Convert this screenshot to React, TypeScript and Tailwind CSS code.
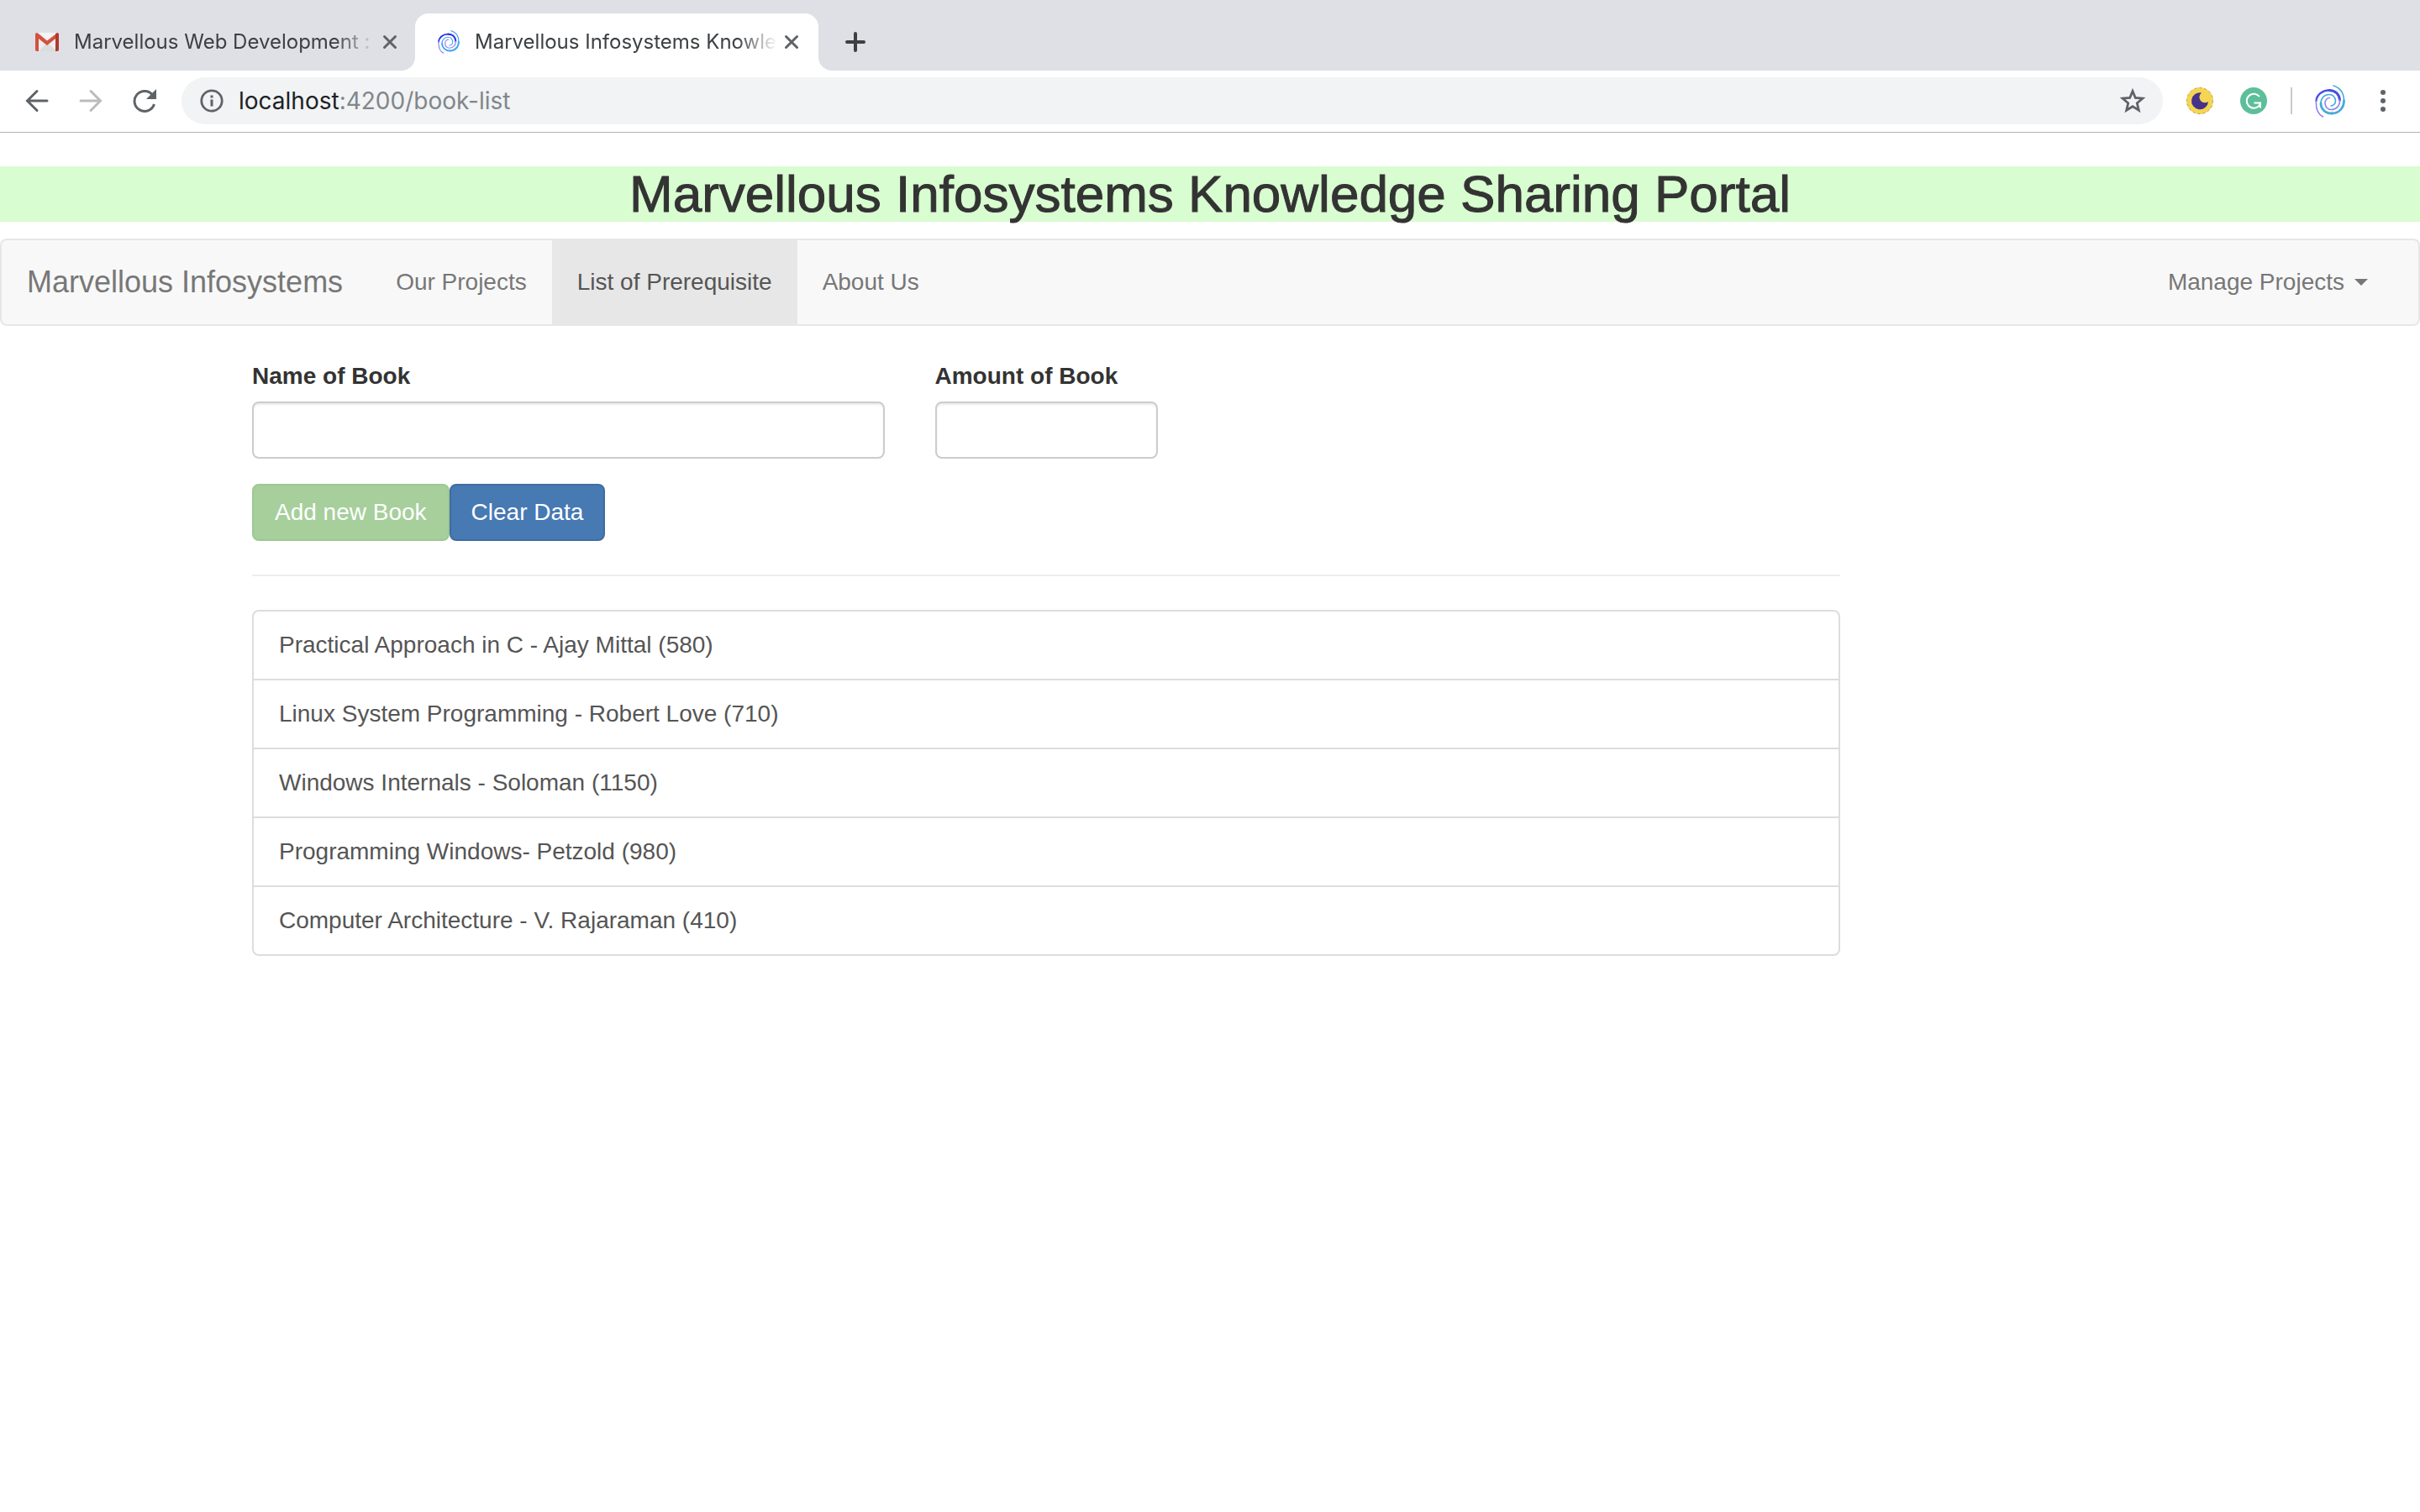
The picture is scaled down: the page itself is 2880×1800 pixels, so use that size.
import React from "react";

const books = [
  { name: "Practical Approach in C - Ajay Mittal", amount: 580 },
  { name: "Linux System Programming - Robert Love", amount: 710 },
  { name: "Windows Internals - Soloman", amount: 1150 },
  { name: "Programming Windows- Petzold", amount: 980 },
  { name: "Computer Architecture - V. Rajaraman", amount: 410 },
];

function GmailIcon() {
  return (
    <svg className="h-[22px] w-7 shrink-0" viewBox="0 0 28 22" aria-hidden="true">
      <path d="M2 0h24v22H2z" fill="#ededed" />
      <path d="M4 22 14 12l12 10z" fill="#dcdcdc" />
      <path d="M4 0h20L14 8z" fill="#f4f4f4" />
      <path d="M0 2v18a2 2 0 0 0 2 2h2V7l10 8 10-8V2l-10 7.500L4 1.200 2 0Q0 0 0 2z" fill="#d2513f" />
      <path d="M24 1.200 26 0q2 0 2 2v18a2 2 0 0 1-2 2h-2z" fill="#b03a2c" />
    </svg>
  );
}

function SwirlIcon({ className, blue, sky }: { className: string; blue: string; sky: string }) {
  return (
    <svg className={className} viewBox="0 0 36 39" fill="none" strokeLinecap="round" aria-hidden="true">
      <g stroke={sky}>
        <path d="M22 1C30 3.500 34.500 10 34.500 19" strokeWidth="1.600" />
        <path d="M34.500 19C34.500 28 28 34 20 34" strokeWidth="2.800" />
        <path d="M20 34C12 34 7 28.500 7 22" strokeWidth="2.800" />
        <path d="M7 22C7 16 11 11.500 17 11.500c4.500 0 7.500 3.500 7.500 7.500 0 3.500-2.500 6-5.500 6" strokeWidth="1.600" />
      </g>
      <g stroke={blue}>
        <path d="M1.500 19C2 12 8.500 6.500 17 6.500" strokeWidth="2.400" />
        <path d="M17 6.500C24 6.500 29 11 29.500 18" strokeWidth="3" />
      </g>
      <g stroke="#8f86ea">
        <path d="M9.500 38C4 35 .8 28 1.500 19" strokeWidth="1.600" />
        <path d="M29.500 18C30 25 25 29.500 19.500 29.500 14.500 29.500 12 25.500 12 21.500c0-3.500 2.500-6 5.500-6" strokeWidth="1.600" />
      </g>
    </svg>
  );
}

function CloseIcon() {
  return (
    <svg className="h-[18px] w-[18px]" viewBox="0 0 18 18" fill="none" stroke="#5f6368" strokeWidth="3" strokeLinecap="round" aria-hidden="true">
      <path d="M2.500 2.500l13 13M15.500 2.500l-13 13" />
    </svg>
  );
}

function TabTitle({ children }: { children: React.ReactNode }) {
  return (
    <span className="block min-w-0 flex-1 whitespace-nowrap text-left [mask-image:linear-gradient(to_right,black_calc(100%-48px),transparent)]">
      {children}
    </span>
  );
}

function TabStrip() {
  return (
    <div className="flex h-[84px] items-end bg-[#dfe0e6] text-[24px] text-[#3c4043]">
      <div className="flex h-[68px] w-[494px] items-center pl-[42px] pr-[21px]">
        <GmailIcon />
        <button type="button" className="ml-[18px] flex min-w-0 flex-1">
          <TabTitle>Marvellous Web Development :</TabTitle>
        </button>
        <button type="button" aria-label="Close tab" className="ml-2">
          <CloseIcon />
        </button>
      </div>
      <div className="relative flex h-[68px] w-[480px] items-center rounded-t-2xl bg-white pl-[27px] pr-[23px]">
        <svg className="absolute -left-4 bottom-0 h-4 w-4" viewBox="0 0 16 16" aria-hidden="true">
          <path d="M16 0v16H0A16 16 0 0 0 16 0z" fill="#fff" />
        </svg>
        <svg className="absolute -right-4 bottom-0 h-4 w-4" viewBox="0 0 16 16" aria-hidden="true">
          <path d="M0 0v16h16A16 16 0 0 1 0 0z" fill="#fff" />
        </svg>
        <SwirlIcon className="h-8 w-[26px] shrink-0" blue="#2a2ef0" sky="#45a6f5" />
        <button type="button" className="ml-[18px] flex min-w-0 flex-1">
          <TabTitle>Marvellous Infosystems Knowle</TabTitle>
        </button>
        <button type="button" aria-label="Close tab" className="ml-2">
          <CloseIcon />
        </button>
      </div>
      <button type="button" aria-label="New tab" className="ml-8 flex h-[68px] items-center">
        <svg className="h-6 w-6" viewBox="0 0 24 24" fill="none" stroke="#3c4043" strokeWidth="4" strokeLinecap="round" aria-hidden="true">
          <path d="M12 2v20M2 12h20" />
        </svg>
      </button>
    </div>
  );
}

function Toolbar() {
  return (
    <div className="flex h-[74px] items-center border-b border-[#b1b3b5] bg-white pb-px pl-[30px] pr-[41px]">
      <div className="flex gap-9">
        <button type="button" aria-label="Back">
          <svg className="h-7 w-7" viewBox="0 0 28 28" fill="none" stroke="#5f6368" strokeWidth="3" strokeLinecap="round" aria-hidden="true">
            <path d="M26 14H3M14 2.500 2.500 14 14 25.500" />
          </svg>
        </button>
        <button type="button" aria-label="Forward" disabled>
          <svg className="h-7 w-7" viewBox="0 0 28 28" fill="none" stroke="#babcbe" strokeWidth="3" strokeLinecap="round" aria-hidden="true">
            <path d="M2 14h23M14 2.500 25.500 14 14 25.500" />
          </svg>
        </button>
        <button type="button" aria-label="Reload">
          <svg className="h-7 w-7" viewBox="0 0 28 28" fill="none" aria-hidden="true">
            <path d="M23.500 7A12 12 0 1 0 25.500 18" stroke="#5f6368" strokeWidth="3" />
            <path d="M28 0v12H16z" fill="#5f6368" />
          </svg>
        </button>
      </div>
      <div className="ml-[30px] flex h-14 min-w-0 flex-1 items-center rounded-full bg-[#f1f3f4] pl-[22px] pr-5">
        <svg className="h-7 w-7 shrink-0" viewBox="0 0 28 28" fill="none" aria-hidden="true">
          <circle cx="14" cy="14" r="12.200" stroke="#5f6368" strokeWidth="2.800" />
          <path d="M14 12.500v8M14 7.500v3" stroke="#5f6368" strokeWidth="3" />
        </svg>
        <div className="ml-[18px] flex-1 whitespace-nowrap text-[28px] text-[#80868b]">
          <span className="text-[#202124]">localhost</span>:4200/book-list
        </div>
        <button type="button" aria-label="Bookmark this page">
          <svg className="h-8 w-8" viewBox="0 0 32 32" fill="none" stroke="#5f6368" strokeWidth="2.800" aria-hidden="true">
            <path d="M16 4.500l3.300 8 8.600.7-6.600 5.600 2 8.400L16 22.700l-7.300 4.500 2-8.400-6.600-5.600 8.600-.7z" />
          </svg>
        </button>
      </div>
      <div className="ml-7 flex items-center">
        <button type="button" aria-label="Dark mode extension">
          <svg className="h-8 w-8" viewBox="0 0 32 32" aria-hidden="true">
            <circle cx="16" cy="16" r="16" fill="#f5d552" />
            <circle cx="16" cy="16" r="15.500" fill="none" stroke="#a89f80" strokeDasharray="2.500 3.500" />
            <path d="M18 6.500A6.500 6.500 0 0 0 26 17 10 10 0 1 1 18 6.500z" fill="#45338a" />
          </svg>
        </button>
        <button type="button" aria-label="Grammarly" className="ml-8">
          <svg className="h-8 w-8" viewBox="0 0 32 32" fill="none" aria-hidden="true">
            <circle cx="16" cy="16" r="16" fill="#5dbf9a" />
            <path d="M23 11A8.500 8.500 0 1 0 22 22.500L24 19M16.500 18.500h7.500v6" stroke="#fff" strokeWidth="2" />
          </svg>
        </button>
        <div className="ml-7 h-8 w-0.5 bg-[#c8cacc]" />
        <button type="button" aria-label="Profile" className="ml-[27px]">
          <SwirlIcon className="h-[39px] w-9" blue="#4a4de8" sky="#45abd8" />
        </button>
        <button type="button" aria-label="Menu" className="ml-[42px]">
          <svg className="h-7 w-1.5" viewBox="0 0 6 28" fill="#5f6368" aria-hidden="true">
            <circle cx="3" cy="4" r="3" />
            <circle cx="3" cy="14" r="3" />
            <circle cx="3" cy="24" r="3" />
          </svg>
        </button>
      </div>
    </div>
  );
}

function Navbar() {
  return (
    <nav className="flex h-[104px] items-stretch rounded-lg border-2 border-[#e7e7e7] bg-[#f8f8f8] text-[#777]">
      <a href="#home" className="mr-[3px] flex items-center px-[30px] text-[36px]">
        Marvellous Infosystems
      </a>
      <a href="#projects" className="flex items-center px-[30px]">
        Our Projects
      </a>
      <a href="#book-list" aria-current="page" className="flex items-center bg-[#e7e7e7] px-[30px] text-[#555]">
        List of Prerequisite
      </a>
      <a href="#about" className="flex items-center px-[30px]">
        About Us
      </a>
      <button type="button" className="ml-auto mr-[30px] flex items-center gap-3 px-[30px]">
        Manage Projects
        <svg className="h-2 w-4" viewBox="0 0 16 8" fill="#777" aria-hidden="true">
          <path d="M0 0h16L8 8z" />
        </svg>
      </button>
    </nav>
  );
}

const fieldClass =
  "h-[68px] w-full rounded-lg border-2 border-[#ccc] bg-white px-6 text-[#555] shadow-[inset_0_2px_2px_rgba(0,0,0,0.075)] outline-none";

function BookEditor() {
  return (
    <form onSubmit={(e) => e.preventDefault()}>
      <div className="-mx-[30px] grid grid-cols-12">
        <div className="col-span-5 px-[30px]">
          <label htmlFor="name" className="mb-2.5 block font-bold">
            Name of Book
          </label>
          <input id="name" type="text" className={fieldClass} />
        </div>
        <div className="col-span-2 px-[30px]">
          <label htmlFor="amount" className="mb-2.5 block whitespace-nowrap font-bold">
            Amount of Book
          </label>
          <input id="amount" type="text" className={fieldClass} />
        </div>
      </div>
      <div className="mt-[30px] flex">
        <button type="submit" disabled className="h-[68px] rounded-lg border-2 border-[#9dc893] bg-[#a6cf9c] px-[25px] text-white">
          Add new Book
        </button>
        <button type="reset" className="h-[68px] rounded-lg border-2 border-[#3f6ca1] bg-[#4779b3] px-6 text-white">
          Clear Data
        </button>
      </div>
    </form>
  );
}

export default function App() {
  return (
    <div className="min-h-screen bg-white">
      <header className="font-[Inter,sans-serif]">
        <TabStrip />
        <Toolbar />
      </header>
      <div className="pt-10 font-['Liberation_Sans',Arial,sans-serif] text-[28px] leading-[40px] text-[#333]">
        <h1 className="mb-5 bg-[#d8fdd0] text-center text-[62px] leading-[66px] [-webkit-text-stroke:1px_#333]">
          Marvellous Infosystems Knowledge Sharing Portal
        </h1>
        <Navbar />
        <main className="mx-auto mt-10 max-w-[2340px]">
          <div className="w-10/12 px-[30px]">
            <BookEditor />
            <hr className="my-10 border-t-2 border-[#eee]" />
            <ul className="divide-y-2 divide-[#ddd] rounded-lg border-2 border-[#ddd] text-[#555]">
              {books.map((book) => (
                <li key={book.name}>
                  <a href="#book" className="block px-[30px] py-5">
                    {book.name} ({book.amount})
                  </a>
                </li>
              ))}
            </ul>
          </div>
        </main>
      </div>
    </div>
  );
}
